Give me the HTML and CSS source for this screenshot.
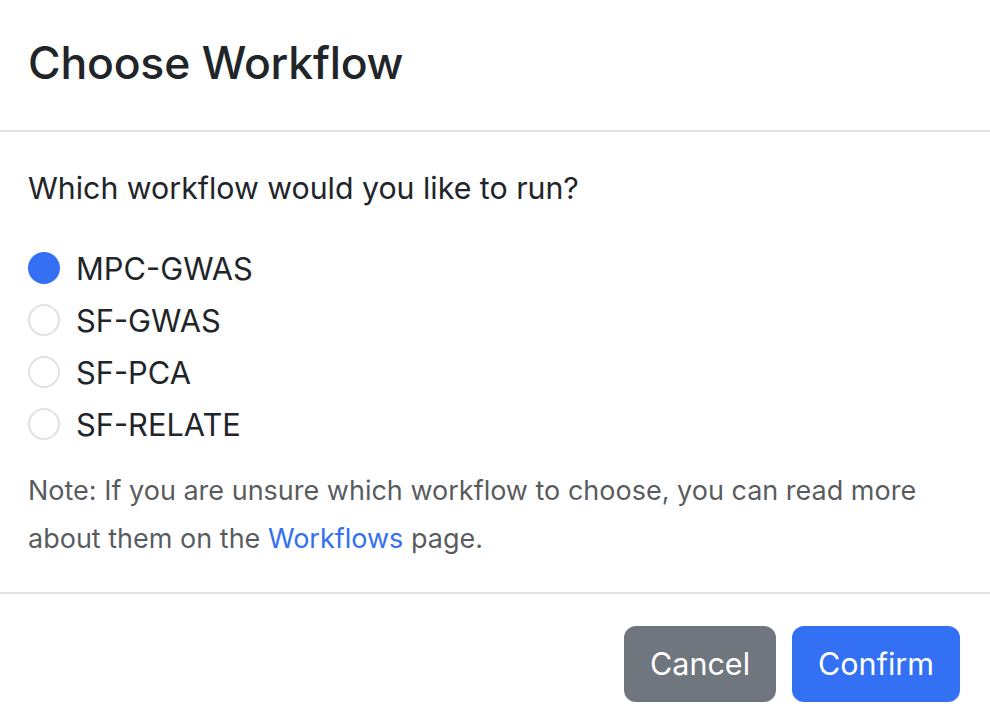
FILE: index.html
```html
<!DOCTYPE html>
<html lang="en">
<head>
<meta charset="utf-8">
<title>Choose Workflow</title>
<link rel="stylesheet" href="styles.css">
</head>
<body>
<div class="modal">
  <div class="modal-header">
    <h5 class="modal-title">Choose Workflow</h5>
  </div>
  <div class="modal-body">
    <p class="question">Which workflow would you like to run?</p>
    <div class="options">
      <label class="form-check"><span class="radio checked"></span><span class="label">MPC-GWAS</span></label>
      <label class="form-check"><span class="radio"></span><span class="label">SF-GWAS</span></label>
      <label class="form-check"><span class="radio"></span><span class="label">SF-PCA</span></label>
      <label class="form-check"><span class="radio"></span><span class="label">SF-RELATE</span></label>
    </div>
    <p class="note">Note: If you are unsure which workflow to choose, you can read more about them on the <a href="#" class="link">Workflows</a> page.</p>
  </div>
  <div class="modal-footer">
    <button class="btn btn-secondary">Cancel</button>
    <button class="btn btn-primary">Confirm</button>
  </div>
</div>
</body>
</html>
```
FILE: styles.css
```css
html, body {
  margin: 0;
  padding: 0;
  background: #fff;
}
body {
  font-family: Inter, "Liberation Sans", sans-serif;
  color: #212529;
}
.modal {
  width: 990px;
}
.modal-header {
  height: 130px;
  display: flex;
  align-items: center;
  padding: 0 28px;
  border-bottom: 2px solid #dee2e6;
  box-sizing: content-box;
}
.modal-title {
  margin: 0 0 4px;
  font-size: 44.5px;
  font-weight: 500;
  line-height: 52px;
  letter-spacing: -0.2px;
}
.modal-body {
  padding: 32px 28px;
}
.question {
  margin: 0 0 32px;
  font-size: 30.3px;
  line-height: 48px;
}
.options {
  display: flex;
  flex-direction: column;
  gap: 4px;
}
.form-check {
  display: flex;
  align-items: center;
  gap: 16px;
  height: 48px;
  font-size: 30.8px;
}
.radio {
  width: 32px;
  height: 32px;
  border-radius: 50%;
  border: 2px solid #dee2e6;
  box-sizing: border-box;
  background: #fff;
  flex: none;
}
.radio.checked {
  background: #3370f4;
  border-color: #3370f4;
}
.note {
  margin: 19px 0 0;
  font-size: 27px;
  line-height: 48px;
  color: rgba(33, 37, 41, 0.75);
}
.link {
  color: #3370f4;
  text-decoration: none;
}
.modal-body {
  padding-bottom: 29px;
}
.modal-footer {
  border-top: 2px solid #dee2e6;
  display: flex;
  justify-content: flex-end;
  gap: 16px;
  padding: 32px 30px 26px;
}
.btn {
  font-family: inherit;
  font-size: 30.5px;
  line-height: 48px;
  padding: 12px 24px;
  border-radius: 12px;
  border: 2px solid transparent;
  color: #fff;
  cursor: pointer;
}
.btn-secondary {
  background: #6f767d;
  border-color: #6f767d;
}
.btn-primary {
  background: #3370f4;
  border-color: #3370f4;
}
```
